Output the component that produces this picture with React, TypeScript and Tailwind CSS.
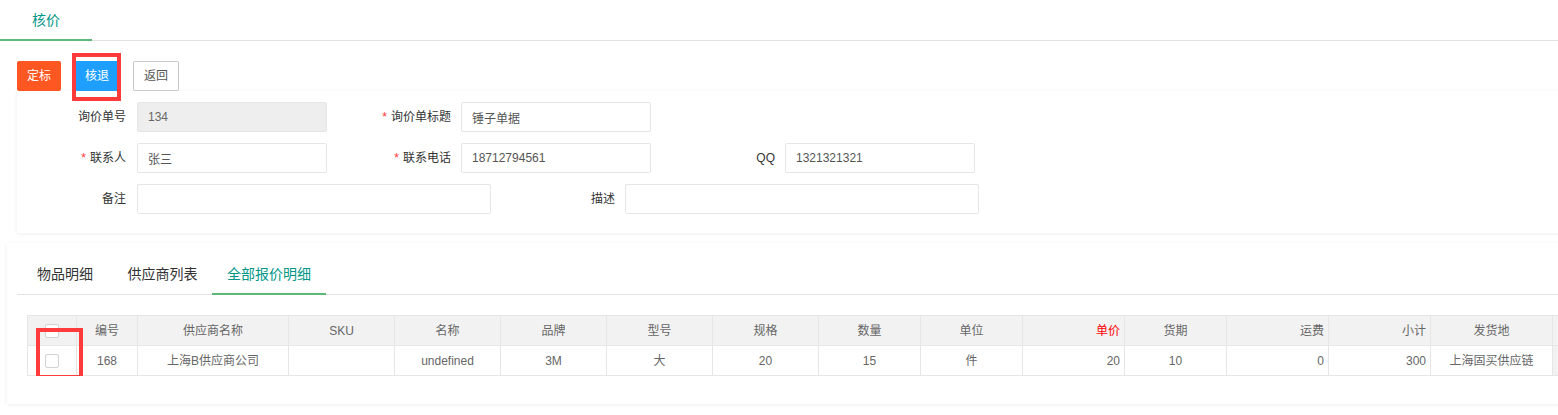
import React from "react";

const cols = [
  { key: "chk", w: 49, title: "", align: "center" },
  { key: "id", w: 61, title: "编号", align: "center" },
  { key: "supplier", w: 151, title: "供应商名称", align: "center" },
  { key: "sku", w: 106, title: "SKU", align: "center" },
  { key: "name", w: 106, title: "名称", align: "center" },
  { key: "brand", w: 106, title: "品牌", align: "center" },
  { key: "model", w: 106, title: "型号", align: "center" },
  { key: "spec", w: 106, title: "规格", align: "center" },
  { key: "qty", w: 102, title: "数量", align: "center" },
  { key: "unit", w: 102, title: "单位", align: "center" },
  { key: "price", w: 102, title: "单价", align: "right" },
  { key: "period", w: 102, title: "货期", align: "center" },
  { key: "freight", w: 102, title: "运费", align: "right" },
  { key: "total", w: 102, title: "小计", align: "right" },
  { key: "origin", w: 122, title: "发货地", align: "center" },
  { key: "more", w: 100, title: "", align: "center" },
];

const row: Record<string, string> = {
  id: "168",
  supplier: "上海B供应商公司",
  sku: "",
  name: "undefined",
  brand: "3M",
  model: "大",
  spec: "20",
  qty: "15",
  unit: "件",
  price: "20",
  period: "10",
  freight: "0",
  total: "300",
  origin: "上海固买供应链",
  more: "",
};

function Label({ text, required, wide }: { text: string; required?: boolean; wide?: boolean }) {
  return (
    <label
      className={`${wide ? "w-[134px] pr-[10px]" : "w-[120px] pr-[11px]"} shrink-0 text-right text-[12px] text-[#333]`}
    >
      {required && <span className="mr-[4px] text-[#ff3333]">*</span>}
      {text}
    </label>
  );
}

function Field({ value, long, disabled }: { value: string; long?: boolean; disabled?: boolean }) {
  return (
    <input
      readOnly
      defaultValue={value}
      className={`${long ? "w-[354px]" : "w-[190px]"} h-[30px] shrink-0 rounded-[2px] border border-[#e6e6e6] pl-[10px] text-[12px] outline-none ${
        disabled ? "bg-[#eeeeee] text-[#666]" : "bg-white text-[#555]"
      }`}
    />
  );
}

function Checkbox() {
  return <span className="inline-block h-[14px] w-[14px] rounded-[2px] border border-[#d2d2d2] bg-white align-middle" />;
}

export default function App() {
  return (
    <div className="h-[415px] w-[1558px] overflow-hidden bg-white font-['Liberation_Sans','Noto_Sans_CJK_SC',sans-serif]">
      {/* page tab */}
      <div className="flex h-[41px] border-b border-[#e2e2e2]">
        <div className="relative w-[92px] text-center text-[14px] leading-[40px] text-[#009688]">
          核价
          <span className="absolute bottom-[-1px] left-0 right-0 h-[2px] bg-[#5fb878]" />
        </div>
      </div>

      {/* actions */}
      <div className="ml-[17px] mt-[20px] flex gap-[14px]">
        <button className="h-[30px] w-[44px] rounded-[2px] bg-[#ff5722] text-[12px] text-white">定标</button>
        <div className="relative">
          <button className="h-[30px] w-[44px] rounded-[2px] bg-[#1e9fff] text-[12px] text-white">核退</button>
          <span className="absolute left-[-3px] top-[-8px] h-[48px] w-[49px] border-[4px] border-[#ff3b3b]" />
        </div>
        <button className="h-[30px] w-[46px] rounded-[2px] border border-[#c9c9c9] bg-white text-[12px] text-[#555]">
          返回
        </button>
      </div>

      {/* form card */}
      <div className="ml-[17px] mr-[-20px] flex flex-col gap-[11px] bg-white pb-[19px] pt-[11px] shadow-[0_1px_4px_rgba(0,0,0,0.07)]">
        <div className="flex h-[30px] items-center">
          <Label text="询价单号" />
          <Field value="134" disabled />
          <Label text="询价单标题" required wide />
          <Field value="锤子单据" />
        </div>
        <div className="flex h-[30px] items-center">
          <Label text="联系人" required />
          <Field value="张三" />
          <Label text="联系电话" required wide />
          <Field value="18712794561" />
          <Label text="QQ" wide />
          <Field value="1321321321" />
        </div>
        <div className="flex h-[30px] items-center">
          <Label text="备注" />
          <Field value="" long />
          <Label text="描述" wide />
          <Field value="" long />
        </div>
      </div>

      {/* detail card */}
      <div className="ml-[7px] mr-[-20px] mt-[10px] bg-white pb-[28px] pl-[10px] pt-[11px] shadow-[0_1px_4px_rgba(0,0,0,0.07)]">
        <div className="flex h-[41px] border-b border-[#e2e2e2] text-[14px] leading-[40px]">
          <div className="w-[96px] text-center text-[#333]">物品明细</div>
          <div className="w-[99px] text-center text-[#333]">供应商列表</div>
          <div className="relative w-[114px] text-center text-[#009688]">
            全部报价明细
            <span className="absolute bottom-[-1px] left-0 right-0 h-[2px] bg-[#5fb878]" />
          </div>
        </div>

        <div className="relative ml-[10px] mt-[20px] overflow-hidden">
          <table className="table-fixed border-collapse text-[12px] text-[#666]" style={{ width: 1625 }}>
            <colgroup>
              {cols.map((c) => (
                <col key={c.key} style={{ width: c.w }} />
              ))}
            </colgroup>
            <thead>
              <tr className="bg-[#f2f2f2]">
                {cols.map((c) => (
                  <th
                    key={c.key}
                    className={`h-[30px] border border-[#e6e6e6] px-[4px] font-normal ${
                      c.align === "right" ? "text-right" : "text-center"
                    } ${c.key === "price" ? "text-[#ff0000]" : ""}`}
                  >
                    {c.key === "chk" ? <Checkbox /> : c.title}
                  </th>
                ))}
              </tr>
            </thead>
            <tbody>
              <tr>
                {cols.map((c) => (
                  <td
                    key={c.key}
                    className={`h-[30px] border border-[#e6e6e6] px-[4px] ${
                      c.align === "right" ? "text-right" : "text-center"
                    } ${c.key === "more" ? "bg-[#f2f2f2]" : ""}`}
                  >
                    {c.key === "chk" ? <Checkbox /> : row[c.key]}
                  </td>
                ))}
              </tr>
            </tbody>
          </table>
          <span className="absolute left-[9px] top-[13px] h-[51px] w-[47px] border-[4px] border-[#ff3b3b]" />
        </div>
      </div>
    </div>
  );
}
